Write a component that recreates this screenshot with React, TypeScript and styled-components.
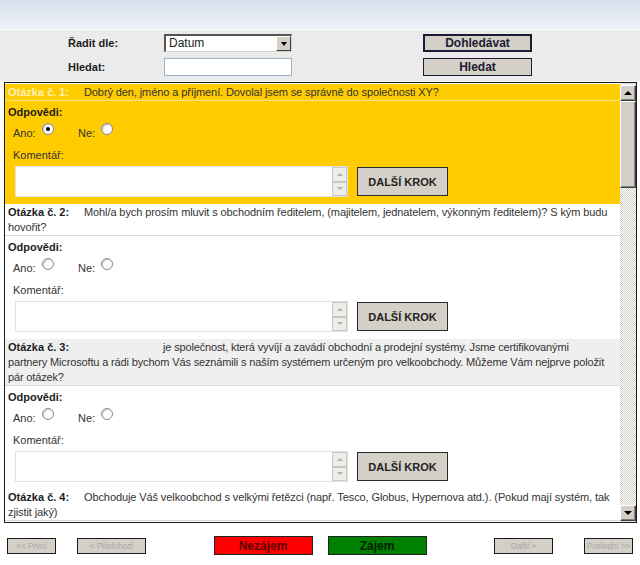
import React from "react";
import styled, { createGlobalStyle, css } from "styled-components";

const Global = createGlobalStyle`
  html, body { margin: 0; padding: 0; background: #ffffff; }
  body { font-family: "Liberation Sans", Arial, sans-serif; font-size: 11px; color: #222; }
  * { box-sizing: border-box; }
`;

const Page = styled.div`
  width: 640px;
  height: 565px;
  display: flex;
  flex-direction: column;
  overflow: hidden;
  background: #ffffff;
`;

const TopBand = styled.div`
  height: 30px;
  background: linear-gradient(#d7e1ef, #eef2f8);
  border-bottom: 1px solid #ffffff;
`;

const FilterPanel = styled.div`
  background: #ebebeb;
  padding: 4px 0 5px 68px;
  display: grid;
  grid-template-columns: 96px 128px 131px 109px;
  grid-template-rows: 18px 18px;
  row-gap: 6px;
  align-items: center;
`;

const FilterLabel = styled.div`
  font-weight: bold;
  font-size: 11px;
  color: #1d1d1d;
`;

const SelectBox = styled.div`
  height: 18px;
  background: #fff;
  border-top: 2px solid #555;
  border-left: 2px solid #555;
  border-right: 1px solid #d4d0c8;
  border-bottom: 1px solid #d4d0c8;
  display: flex;
  align-items: stretch;
  font-size: 12px;
`;

const SelectValue = styled.div`
  flex: 1;
  padding-left: 3px;
  line-height: 15px;
`;

const SelectArrow = styled.div`
  width: 15px;
  background: #d4d0c8;
  border-top: 1px solid #fff;
  border-left: 1px solid #fff;
  border-right: 1px solid #404040;
  border-bottom: 1px solid #404040;
  display: flex;
  align-items: center;
  justify-content: center;
  &::after {
    content: "";
    border-left: 3.5px solid transparent;
    border-right: 3.5px solid transparent;
    border-top: 4px solid #000;
  }
`;

const TextInput = styled.div`
  height: 18px;
  background: #fff;
  border: 1px solid #9fb2c4;
`;

const FormButton = styled.button<{ $strong?: boolean }>`
  grid-column: 4;
  height: 18px;
  width: 109px;
  padding: 0;
  background: #d4d0c8;
  border: 1px solid #1b1b33;
  ${(p) => p.$strong && css`border-width: 2px;`}
  font-family: "Liberation Sans", Arial, sans-serif;
  font-weight: bold;
  font-size: 12px;
  color: #1b1b33;
`;

const Spacer = styled.div``;

const ListFrame = styled.div`
  margin: 1px 3px 0 4px;
  height: 441px;
  border: 1px solid #1a1a1a;
  display: flex;
`;

const ListContent = styled.div`
  flex: 1;
  overflow: hidden;
  padding-top: 1px;
`;

const ScrollBar = styled.div`
  width: 16px;
  display: flex;
  flex-direction: column;
  padding: 2px 0 1px 0;
  background-color: #ffffff;
  background-image: repeating-conic-gradient(#d4d0c8 0 25%, #ffffff 0 50%);
  background-size: 2px 2px;
`;

const Bevel = css`
  background: #d4d0c8;
  border-top: 1px solid #ffffff;
  border-left: 1px solid #ffffff;
  border-right: 1px solid #404040;
  border-bottom: 1px solid #404040;
  box-shadow: inset -1px -1px 0 #808080;
`;

const ScrollArrow = styled.div<{ $down?: boolean }>`
  ${Bevel}
  height: 16px;
  display: flex;
  align-items: center;
  justify-content: center;
  &::after {
    content: "";
    border-left: 4px solid transparent;
    border-right: 4px solid transparent;
    ${(p) =>
      p.$down
        ? css`border-top: 4px solid #000;`
        : css`border-bottom: 4px solid #000;`}
  }
`;

const ScrollThumb = styled.div`
  ${Bevel}
  height: 87px;
`;

const Track = styled.div`
  flex: 1;
`;

const Question = styled.div<{ $active?: boolean }>`
  background: ${(p) => (p.$active ? "#ffcc00" : "#ffffff")};
`;

const QuestionHead = styled.div<{ $active?: boolean; $shaded?: boolean; $tight?: boolean }>`
  padding: 1px 2px 0 3px;
  line-height: 15px;
  font-size: 11px;
  letter-spacing: ${(p) => (p.$tight ? "-0.15px" : "-0.1px")};
  white-space: ${(p) => (p.$tight ? "nowrap" : "normal")};
  color: #333;
  border-bottom: 1px solid ${(p) => (p.$active ? "#ffe27a" : "#d9d9d9")};
  background: ${(p) => (p.$shaded ? "#efefef" : "transparent")};
`;

const QuestionNo = styled.span<{ $active?: boolean }>`
  display: inline-block;
  width: 76px;
  font-weight: bold;
  font-size: 11px;
  letter-spacing: 0;
  color: ${(p) => (p.$active ? "#fff1b8" : "#1d1d1d")};
`;

const Blank = styled.span`
  display: inline-block;
  width: 79px;
`;

const Answers = styled.div`
  padding: 3px 0 7px 3px;
  display: flex;
  flex-direction: column;
`;

const AnswersTitle = styled.div`
  font-weight: bold;
  font-size: 11px;
  line-height: 16px;
  color: #1d1d1d;
`;

const RadioRow = styled.div`
  margin-top: 5px;
  padding-left: 5px;
  display: flex;
  line-height: 16px;
  color: #333;
`;

const RadioGroup = styled.label`
  width: 65px;
  display: flex;
  align-items: flex-start;
  gap: 6px;
`;

const Radio = styled.span<{ $checked?: boolean }>`
  width: 12px;
  height: 12px;
  margin-top: -2px;
  border-radius: 50%;
  background: #fff;
  border: 1px solid #8a8a8a;
  box-shadow: inset 1px 1px 1px #c8c8c8;
  display: flex;
  align-items: center;
  justify-content: center;
  &::after {
    content: "";
    width: 4px;
    height: 4px;
    border-radius: 50%;
    background: ${(p) => (p.$checked ? "#000" : "transparent")};
  }
`;

const CommentLabel = styled.div`
  margin-top: 6px;
  padding-left: 5px;
  line-height: 16px;
  color: #333;
`;

const CommentRow = styled.div`
  margin-top: 3px;
  padding-left: 7px;
  display: flex;
  align-items: center;
  gap: 9px;
`;

const TextArea = styled.div`
  width: 333px;
  height: 31px;
  background: #fff;
  border: 1px solid #e2e2e2;
  display: flex;
  justify-content: flex-end;
`;

const Spin = styled.div`
  width: 15px;
  display: flex;
  flex-direction: column;
`;

const SpinBtn = styled.div<{ $down?: boolean }>`
  flex: 1;
  background: #eeede9;
  border: 1px solid #c9c7c0;
  display: flex;
  align-items: center;
  justify-content: center;
  &::after {
    content: "";
    border-left: 3px solid transparent;
    border-right: 3px solid transparent;
    ${(p) =>
      p.$down
        ? css`border-top: 3px solid #b0b0b0;`
        : css`border-bottom: 3px solid #b0b0b0;`}
  }
`;

const StepButton = styled.button`
  width: 91px;
  height: 29px;
  padding: 0;
  background: #d4d0c8;
  border: 1px solid #2a2a2a;
  font-family: "Liberation Sans", Arial, sans-serif;
  font-weight: bold;
  font-size: 11px;
  color: #222;
`;

const Footer = styled.div`
  padding: 13px 7px 0 7px;
  display: flex;
  justify-content: space-between;
  align-items: center;
`;

const NavGroup = styled.div<{ $gap: number }>`
  display: flex;
  align-items: center;
  gap: ${(p) => p.$gap}px;
`;

const NavButton = styled.button<{ $w: number }>`
  width: ${(p) => p.$w}px;
  height: 16px;
  padding: 0;
  background: #d4d0c8;
  border: 1px solid #1a1a1a;
  font-family: "Liberation Sans", Arial, sans-serif;
  font-size: 8.5px;
  letter-spacing: -0.2px;
  line-height: 14px;
  white-space: nowrap;
  color: #a8a8a8;
`;

const DecisionButton = styled.button<{ $tone: "red" | "green" }>`
  width: 99px;
  height: 19px;
  padding: 0;
  border: 1px solid #222;
  background: ${(p) => (p.$tone === "red" ? "#ff0000" : "#008000")};
  color: ${(p) => (p.$tone === "red" ? "#5a0000" : "#002000")};
  font-family: "Liberation Sans", Arial, sans-serif;
  font-weight: bold;
  font-size: 12px;
`;

type Q = {
  no: number;
  lines: string[];
  blank?: boolean;
  active?: boolean;
  shaded?: boolean;
  checked?: boolean;
  tight?: boolean;
};

const questions: Q[] = [
  {
    no: 1,
    lines: ["Dobrý den, jméno a příjmení. Dovolal jsem se správně do společnosti XY?"],
    active: true,
    checked: true,
  },
  {
    no: 2,
    lines: [
      "Mohl/a bych prosím mluvit s obchodním ředitelem, (majitelem, jednatelem, výkonným ředitelem)? S kým budu hovořit?",
    ],
  },
  {
    no: 3,
    blank: true,
    shaded: true,
    tight: true,
    lines: [
      "je společnost, která vyvíjí a zavádí obchodní a prodejní systémy. Jsme certifikovanými",
      "partnery Microsoftu a rádi bychom Vás seznámili s naším systémem určeným pro velkoobchody. Můžeme Vám nejprve položit",
      "pár otázek?",
    ],
  },
  {
    no: 4,
    lines: [
      "Obchoduje Váš velkoobchod s velkými řetězci (např. Tesco, Globus, Hypernova atd.). (Pokud mají systém, tak zjistit jaký)",
    ],
  },
];

function QuestionBlock({ q }: { q: Q }) {
  return (
    <Question $active={q.active}>
      <QuestionHead $active={q.active} $shaded={q.shaded} $tight={q.tight}>
        <QuestionNo $active={q.active}>Otázka č. {q.no}:</QuestionNo>
        {q.blank && <Blank />}
        {q.lines.map((l, i) => (
          <React.Fragment key={i}>
            {i > 0 && <br />}
            {l}
          </React.Fragment>
        ))}
      </QuestionHead>
      <Answers>
        <AnswersTitle>Odpovědi:</AnswersTitle>
        <RadioRow>
          <RadioGroup>
            Ano: <Radio $checked={q.checked} />
          </RadioGroup>
          <RadioGroup>
            Ne: <Radio />
          </RadioGroup>
        </RadioRow>
        <CommentLabel>Komentář:</CommentLabel>
        <CommentRow>
          <TextArea>
            <Spin>
              <SpinBtn />
              <SpinBtn $down />
            </Spin>
          </TextArea>
          <StepButton>DALŠÍ KROK</StepButton>
        </CommentRow>
      </Answers>
    </Question>
  );
}

export default function App() {
  return (
    <Page>
      <Global />
      <TopBand />
      <FilterPanel>
        <FilterLabel>Řadit dle:</FilterLabel>
        <SelectBox>
          <SelectValue>Datum</SelectValue>
          <SelectArrow />
        </SelectBox>
        <Spacer />
        <FormButton $strong>Dohledávat</FormButton>
        <FilterLabel>Hledat:</FilterLabel>
        <TextInput />
        <Spacer />
        <FormButton>Hledat</FormButton>
      </FilterPanel>
      <ListFrame>
        <ListContent>
          {questions.map((q) => (
            <QuestionBlock key={q.no} q={q} />
          ))}
        </ListContent>
        <ScrollBar>
          <ScrollArrow />
          <ScrollThumb />
          <Track />
          <ScrollArrow $down />
        </ScrollBar>
      </ListFrame>
      <Footer>
        <NavGroup $gap={21}>
          <NavButton $w={49}>&lt;&lt; První</NavButton>
          <NavButton $w={69}>&lt; Předchozí</NavButton>
        </NavGroup>
        <NavGroup $gap={15}>
          <DecisionButton $tone="red">Nezájem</DecisionButton>
          <DecisionButton $tone="green">Zájem</DecisionButton>
        </NavGroup>
        <NavGroup $gap={31}>
          <NavButton $w={59}>Další &gt;</NavButton>
          <NavButton $w={49}>Poslední &gt;&gt;</NavButton>
        </NavGroup>
      </Footer>
    </Page>
  );
}
